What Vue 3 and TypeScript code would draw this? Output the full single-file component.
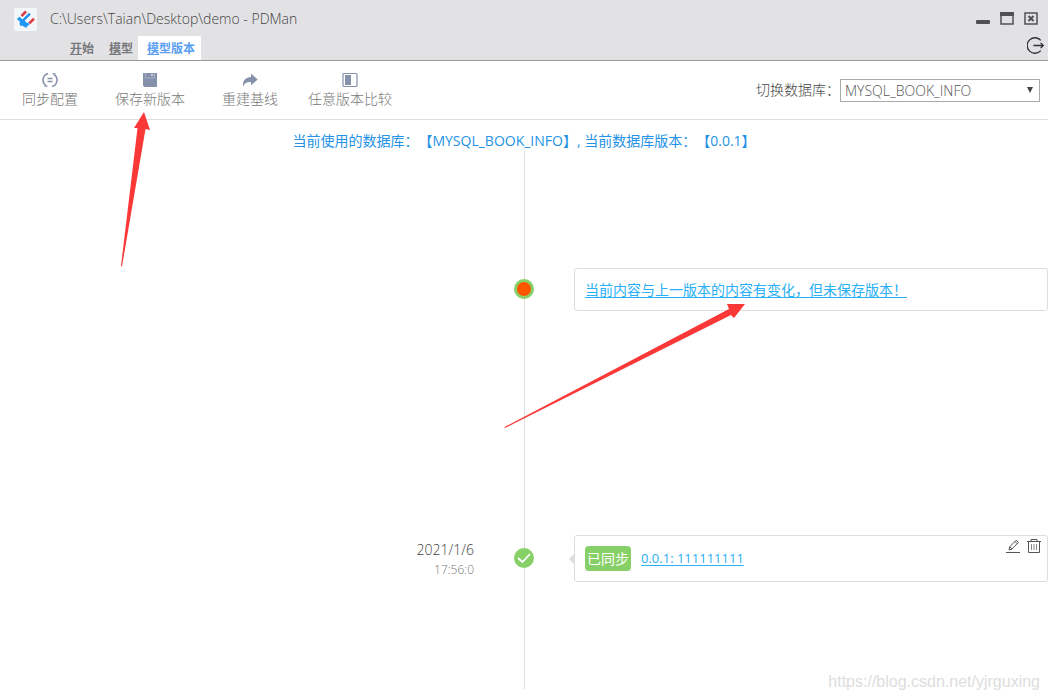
<script setup lang="ts">
import { ref } from 'vue'

const menus: string[] = ['开始', '模型', '模型版本']
const activeMenu = ref<string>('模型版本')

interface Tool {
  icon: 'sync' | 'save' | 'share' | 'compare'
  label: string
}
const tools: Tool[] = [
  { icon: 'sync', label: '同步配置' },
  { icon: 'save', label: '保存新版本' },
  { icon: 'share', label: '重建基线' },
  { icon: 'compare', label: '任意版本比较' },
]

const databases: string[] = ['MYSQL_BOOK_INFO']
const database = ref<string>('MYSQL_BOOK_INFO')
const version = ref<string>('0.0.1')
</script>

<template>
  <div class="app">
    <header class="titlebar">
      <div class="title-row">
        <svg class="logo" viewBox="0 0 23 23" aria-hidden="true">
          <rect width="23" height="23" rx="2" fill="#f4f7fa" />
          <path d="M7.500 8 12 3.500M15.300 15.200 20 10.800" fill="none" stroke="#dc4046" stroke-width="2.600" />
          <path d="M2.800 11 5.500 8.700 8.300 11.500 15 4.800 16.800 6.600 10.700 12.800 13.300 15.200 14.500 14.300 15.500 16.500 13 18.500 12.200 20 8.500 17.800 6.200 17.800 5.500 15.500 6 13.800z" fill="#2196f3" />
        </svg>
        <span class="path">C:\Users\Taian\Desktop\demo - PDMan</span>
        <div class="window-buttons">
          <button type="button" aria-label="最小化">
            <svg viewBox="0 0 14 14"><rect y="8" width="14" height="4" rx="1" fill="#505153" /></svg>
          </button>
          <button type="button" aria-label="最大化">
            <svg viewBox="0 0 14 14"><path d="M1 1h12v11H1z" fill="none" stroke="#505153" stroke-width="1.500" /><path d="M0 0h14v4H0z" fill="#505153" /></svg>
          </button>
          <button type="button" aria-label="关闭">
            <svg viewBox="0 0 14 14"><path d="M1 1h12v11H1z" fill="none" stroke="#505153" stroke-width="1.500" /><path d="M4.500 4l5 5M9.500 4l-5 5" stroke="#505153" stroke-width="2" /></svg>
          </button>
        </div>
      </div>
      <div class="menu-row">
        <nav class="menus">
          <button
            v-for="menu in menus"
            :key="menu"
            type="button"
            class="menu"
            :class="{ active: menu === activeMenu }"
            @click="activeMenu = menu"
          ><u>{{ menu.charAt(0) }}</u>{{ menu.slice(1) }}</button>
        </nav>
        <button type="button" class="exit" aria-label="退出">
          <svg viewBox="0 0 16 16" fill="none" stroke="#303133" stroke-width="1.200">
            <path d="M13 3.200A7.300 7.300 0 1 0 13 12.800M6 8h9.300M12.800 5.500 15.300 8l-2.500 2.500" />
          </svg>
        </button>
      </div>
    </header>

    <div class="toolbar">
      <div class="tools">
        <button v-for="tool in tools" :key="tool.label" type="button" class="tool">
          <svg viewBox="0 0 16 16" aria-hidden="true">
            <g v-if="tool.icon === 'sync'" fill="none" stroke="#8591ab" stroke-width="1.500">
              <path d="M6 1.500A6.800 6.800 0 0 0 4 13.700M10 14.500A6.800 6.800 0 0 0 12 2.300M5.500 6.500h5M5.500 9.500h5" />
              <path d="M2.500 14.200h3M10.500 1.800h3" stroke-width="1.200" />
            </g>
            <g v-else-if="tool.icon === 'save'">
              <path d="M1 1h14v14H2.500L1 13.500z" fill="#8591ab" />
              <path d="M3.500 1v5h9V1" fill="none" stroke="#a9b2c5" />
              <path d="M9 2h2v2H9z" fill="#c9cfdb" />
            </g>
            <path v-else-if="tool.icon === 'share'" d="M9 1.500 15.700 7.500 9 13.200V10C5 9.800 2.500 11 1.200 14.500.2 9 3.500 5.200 9 5z" fill="#8591ab" />
            <g v-else>
              <rect x="1" y="1.500" width="14" height="13" rx="1" fill="none" stroke="#8591ab" stroke-width="1.200" />
              <path d="M3 3h6v10H3z" fill="#8591ab" />
            </g>
          </svg>
          <span>{{ tool.label }}</span>
        </button>
      </div>
      <div class="switcher">
        <label for="database">切换数据库：</label>
        <div class="select-box">
          <select id="database" v-model="database">
            <option v-for="name in databases" :key="name" :value="name">{{ name }}</option>
          </select>
          <svg viewBox="0 0 6 6" aria-hidden="true"><path d="M0 0h6L3 6z" fill="#444" /></svg>
        </div>
      </div>
    </div>

    <main class="content">
      <p class="summary">当前使用的数据库：【{{ database }}】, 当前数据库版本：【{{ version }}】</p>
      <ol class="timeline">
        <li class="entry">
          <div></div>
          <span class="node pending"></span>
          <div class="card notice">
            <a href="#changes">当前内容与上一版本的内容有变化，但未保存版本！</a>
          </div>
        </li>
        <li class="entry">
          <div class="when">
            <span class="date">2021/1/6</span>
            <span class="time">17:56:0</span>
          </div>
          <span class="node done">
            <svg viewBox="0 0 20 20" aria-hidden="true"><path d="M4 10 8.500 14 16 6" fill="none" stroke="#fff" stroke-width="1.800" /></svg>
          </span>
          <div class="card version">
            <span class="badge">已同步</span>
            <a href="#version">0.0.1: 111111111</a>
            <div class="actions">
              <button type="button" aria-label="编辑">
                <svg viewBox="0 0 14 14" fill="none" stroke="#555"><path d="M0 13.500h14M3 11l.7-3.200L10.200 1.200l2.200 2.200L6 10zM9 2.500l2.200 2.200M3.700 7.800 6 10" /></svg>
              </button>
              <button type="button" aria-label="删除">
                <svg viewBox="0 0 14 14" fill="none" stroke="#555"><path d="M0 2.500h14M4 2.500v-2h6v2M1.500 2.500v11h11v-11" /><path d="M4.500 5v6M7 5v6M9.500 5v6" stroke="#888" /></svg>
              </button>
            </div>
          </div>
        </li>
      </ol>
    </main>

    <svg class="arrows" width="760" height="440" viewBox="0 0 760 440" fill="#fb3838" aria-hidden="true">
      <path d="M144 112 150 130 145.500 129 122 266.500 121 266 137.500 128 134 128z" />
      <path d="M745 304 734 318 731 315 505 428 504.500 427 729 309 727 304z" />
    </svg>
    <span class="watermark">https://blog.csdn.net/yjrguxing</span>
  </div>
</template>

<style>
body {
  margin: 0;
}
</style>

<style scoped>
.app {
  position: relative;
  display: flex;
  flex-direction: column;
  box-sizing: border-box;
  min-height: 100vh;
  background: #fff;
  color: #444;
  font: 300 14px/20px "Open Sans", "Noto Sans CJK SC", sans-serif;
  text-spacing-trim: space-all;
}
button {
  margin: 0;
  padding: 0;
  border: 0;
  background: none;
  color: inherit;
  font: inherit;
  cursor: pointer;
}
svg {
  display: block;
}
.titlebar {
  border-bottom: 1px solid #999;
  background: #e2e2e4;
}
.title-row {
  display: flex;
  align-items: center;
  box-sizing: border-box;
  height: 36px;
  padding: 2px 10px 0 14px;
}
.logo {
  width: 23px;
  height: 23px;
}
.path {
  margin-left: 13px;
}
.window-buttons {
  display: flex;
  gap: 10px;
  margin-left: auto;
}
.window-buttons svg {
  width: 14px;
  height: 14px;
}
.menu-row {
  display: flex;
  justify-content: space-between;
  height: 24px;
  padding: 0 4px 0 65px;
}
.menus {
  display: flex;
}
.menu {
  padding: 2px 5px 0;
  margin-right: 5px;
  color: #77787c;
  font-size: 12px;
  font-weight: 700;
}
.menu.active {
  margin-left: -5px;
  padding: 2px 6px 0 9px;
  background: #fff;
  color: #5b9ff2;
}
.exit svg {
  width: 17px;
  height: 17px;
  margin-bottom: 6px;
}
.toolbar {
  display: flex;
  align-items: center;
  justify-content: space-between;
  height: 58px;
  padding-right: 8px;
  border-bottom: 1px solid #ddd;
}
.tools {
  display: flex;
}
.tool {
  display: flex;
  flex-direction: column;
  align-items: center;
  gap: 1px;
  width: 100px;
  color: #777;
  white-space: nowrap;
}
.tool svg {
  width: 16px;
  height: 16px;
}
.switcher {
  display: flex;
  align-items: center;
}
.select-box {
  display: grid;
  align-items: center;
}
.select-box > * {
  grid-area: 1 / 1;
}
.select-box svg {
  justify-self: end;
  width: 6px;
  height: 6px;
  margin-right: 7px;
  pointer-events: none;
}
select {
  width: 200px;
  height: 23px;
  padding: 1px 4px 0;
  border: 1px solid #aaa;
  border-radius: 0;
  background: #fff;
  color: #555;
  font: inherit;
  appearance: none;
}
.content {
  display: flex;
  flex: 1;
  flex-direction: column;
  padding: 11px 0;
}
.summary {
  margin: 0;
  color: #2492e6;
  font-weight: 400;
  text-align: center;
}
.timeline {
  display: flex;
  flex: 1;
  flex-direction: column;
  margin: 0;
  padding: 0;
  background: linear-gradient(#ddd, #ddd) center / 1px 100% no-repeat;
  list-style: none;
}
.entry {
  display: grid;
  flex: 1;
  grid-template-columns: 1fr 100px 1fr;
  align-items: center;
  padding-top: 9px;
}
.when {
  display: flex;
  flex-direction: column;
  align-items: flex-end;
  padding-top: 4px;
}
.time {
  color: #777;
  font-size: 12px;
}
.node {
  box-sizing: border-box;
  justify-self: center;
  width: 20px;
  height: 20px;
  border-radius: 50%;
  background: #87d068;
}
.pending {
  border: 3px solid #87d068;
  background: #ff5500;
}
.card {
  position: relative;
  display: flex;
  align-items: center;
  box-sizing: border-box;
  padding: 10px;
  border: 1px solid #ddd;
  border-radius: 3px;
}
.notice {
  padding: 11px 10px 10px;
}
.version::before {
  position: absolute;
  top: 17px;
  left: -6px;
  border: 6px solid transparent;
  border-left: 0;
  border-right-color: #ddd;
  content: "";
}
.card a {
  color: #29b0f5;
  font-weight: 400;
  text-underline-offset: 2px;
}
.version a {
  font-size: 13px;
}
.badge {
  margin-right: 10px;
  padding: 3px 2px 2px;
  border-radius: 4px;
  background: #87d068;
  color: #fff;
  font-weight: 400;
}
.actions {
  display: flex;
  align-self: flex-start;
  gap: 7px;
  margin: -7px -4px 0 auto;
}
.actions svg {
  width: 14px;
  height: 14px;
}
.arrows {
  position: absolute;
  top: 0;
  left: 0;
  pointer-events: none;
}
.watermark {
  position: absolute;
  right: 8px;
  bottom: 8px;
  color: #ddd;
  font: 16px/20px "Liberation Sans", Arial, sans-serif;
}
</style>
